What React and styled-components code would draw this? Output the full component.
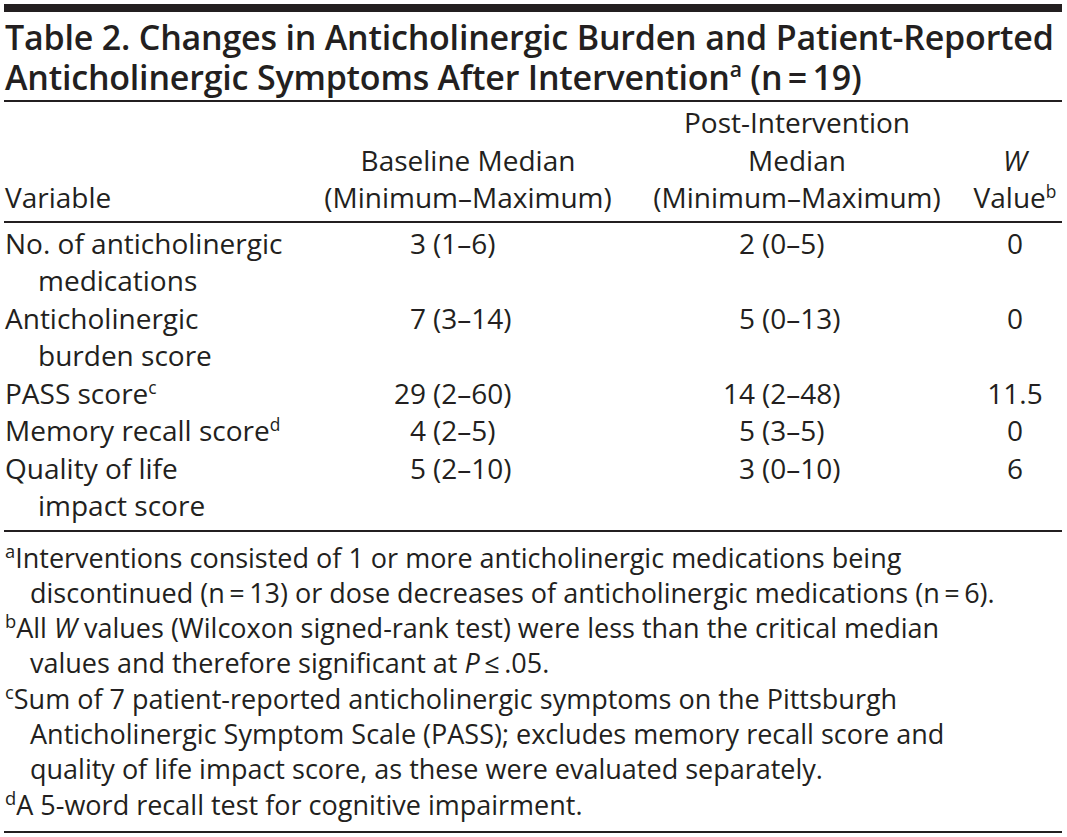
import React from "react";
import styled, { createGlobalStyle } from "styled-components";

const Global = createGlobalStyle`
  html, body { margin: 0; padding: 0; background: #ffffff; }
  body { font-family: "Open Sans", "Liberation Sans", sans-serif; color: #231f20; }
`;

const Page = styled.div`
  width: 1058px;
  padding: 4px 5px 0 4px;
`;

const TopRule = styled.div`
  height: 8px;
  background: #231f20;
`;

const Title = styled.h1`
  margin: 0;
  padding: 5px 0 3px 1px;
  font-size: 34px;
  font-weight: 600;
  line-height: 40px;
  letter-spacing: -0.2px;
  white-space: nowrap;
  border-bottom: 2px solid #231f20;
`;

const Sup = styled.sup`
  font-size: 0.62em;
  line-height: 0;
  vertical-align: 0.6em;
  font-weight: inherit;
`;

const Table = styled.table`
  width: 100%;
  border-collapse: collapse;
  font-size: 28px;
  line-height: 37.5px;
  border-bottom: 2px solid #231f20;
`;

const Th = styled.th`
  font-weight: 400;
  vertical-align: bottom;
  white-space: nowrap;
  text-align: ${(p) => p.$align || "center"};
  padding: 2px 0 4px ${(p) => (p.$align === "left" ? "1px" : "0")};
  width: ${(p) => p.$w};
  border-bottom: 2px solid #231f20;
`;

const Td = styled.td`
  vertical-align: top;
  white-space: nowrap;
  text-align: ${(p) => p.$align || "center"};
  padding: ${(p) => (p.$first ? "2px" : "0")} 0 ${(p) => (p.$last ? "5px" : "0")}
    ${(p) => (p.$align === "left" ? "1px" : "0")};
`;

const VarLabel = styled.div`
  padding-left: 33px;
  text-indent: -33px;
`;

const Pair = styled.span`
  display: inline-grid;
  grid-template-columns: 34px 111px;
  column-gap: 7px;
  text-align: left;
`;

const Median = styled.span`
  justify-self: end;
`;

const Range = styled.span``;

const Notes = styled.div`
  font-size: 27px;
  line-height: 35.3px;
  white-space: nowrap;
  padding: 8px 0 9px 1px;
  border-bottom: 2px solid #231f20;
`;

const Note = styled.p`
  margin: 0;
  padding-left: 25px;
  text-indent: -25px;
`;

const NoteMark = styled.sup`
  font-size: 0.68em;
  line-height: 0;
  vertical-align: 0.55em;
`;

const I = styled.i`
  font-style: italic;
`;

const rows = [
  { label: ["No. of anticholinergic", "medications"], b: ["3", "(1–6)"], p: ["2", "(0–5)"], w: "0" },
  { label: ["Anticholinergic", "burden score"], b: ["7", "(3–14)"], p: ["5", "(0–13)"], w: "0" },
  { label: ["PASS score"], sup: "c", b: ["29", "(2–60)"], p: ["14", "(2–48)"], w: "11.5" },
  { label: ["Memory recall score"], sup: "d", b: ["4", "(2–5)"], p: ["5", "(3–5)"], w: "0" },
  { label: ["Quality of life", "impact score"], b: ["5", "(2–10)"], p: ["3", "(0–10)"], w: "6" },
];

function Val({ v }) {
  return (
    <Pair>
      <Median>{v[0]}</Median>
      <Range>{v[1]}</Range>
    </Pair>
  );
}

const eq = "\u2009=\u2009";

export default function App() {
  return (
    <>
      <Global />
      <Page>
        <TopRule />
        <Title>
          Table 2. Changes in Anticholinergic Burden and Patient-Reported
          <br />
          Anticholinergic Symptoms After Intervention<Sup>a</Sup> (n{eq}19)
        </Title>
        <Table>
          <thead>
            <tr>
              <Th $align="left" $w="305px">Variable</Th>
              <Th $w="316px">
                Baseline Median
                <br />
                (Minimum–Maximum)
              </Th>
              <Th $w="342px">
                Post-Intervention
                <br />
                Median
                <br />
                (Minimum–Maximum)
              </Th>
              <Th>
                <I>W</I>
                <br />
                Value<Sup>b</Sup>
              </Th>
            </tr>
          </thead>
          <tbody>
            {rows.map((r, i) => {
              const first = i === 0;
              const last = i === rows.length - 1;
              return (
                <tr key={i}>
                  <Td $align="left" $first={first} $last={last}>
                    <VarLabel>
                      {r.label[0]}
                      {r.sup && <Sup>{r.sup}</Sup>}
                      {r.label[1] && (
                        <>
                          <br />
                          {r.label[1]}
                        </>
                      )}
                    </VarLabel>
                  </Td>
                  <Td $first={first} $last={last}>
                    <Val v={r.b} />
                  </Td>
                  <Td $first={first} $last={last}>
                    <Val v={r.p} />
                  </Td>
                  <Td $first={first} $last={last}>{r.w}</Td>
                </tr>
              );
            })}
          </tbody>
        </Table>
        <Notes>
          <Note>
            <NoteMark>a</NoteMark>Interventions consisted of 1 or more anticholinergic medications being
            <br />
            discontinued (n{eq}13) or dose decreases of anticholinergic medications (n{eq}6).
          </Note>
          <Note>
            <NoteMark>b</NoteMark>All <I>W</I> values (Wilcoxon signed-rank test) were less than the critical median
            <br />
            values and therefore significant at <I>P</I>{"\u2009≤\u2009"}.05.
          </Note>
          <Note>
            <NoteMark>c</NoteMark>Sum of 7 patient-reported anticholinergic symptoms on the Pittsburgh
            <br />
            Anticholinergic Symptom Scale (PASS); excludes memory recall score and
            <br />
            quality of life impact score, as these were evaluated separately.
          </Note>
          <Note>
            <NoteMark>d</NoteMark>A 5-word recall test for cognitive impairment.
          </Note>
        </Notes>
      </Page>
    </>
  );
}
